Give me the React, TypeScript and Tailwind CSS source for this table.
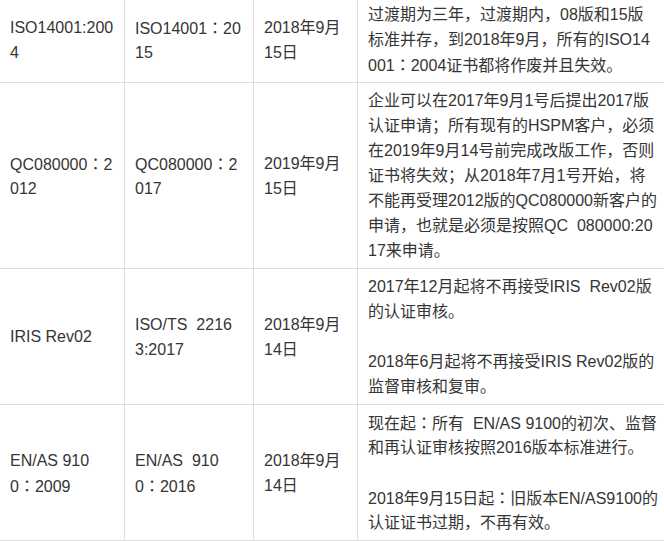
const rows = [
  {
    a: ['ISO14001:200', '4'],
    b: ['ISO14001：20', '15'],
    c: ['2018年9月', '15日'],
    d: [
      '过渡期为三年，过渡期内，08版和15版',
      '标准并存，到2018年9月，所有的ISO14',
      '001：2004证书都将作废并且失效。',
    ],
  },
  {
    a: ['QC080000：2', '012'],
    b: ['QC080000：2', '017'],
    c: ['2019年9月', '15日'],
    d: [
      '企业可以在2017年9月1号后提出2017版',
      '认证申请；所有现有的HSPM客户，必须',
      '在2019年9月14号前完成改版工作，否则',
      '证书将失效；从2018年7月1号开始，将',
      '不能再受理2012版的QC080000新客户的',
      '申请，也就是必须是按照QC  080000:20',
      '17来申请。',
    ],
  },
  {
    a: ['IRIS Rev02'],
    b: ['ISO/TS  2216', '3:2017'],
    c: ['2018年9月', '14日'],
    d: [
      '2017年12月起将不再接受IRIS  Rev02版',
      '的认证审核。',
      '',
      '2018年6月起将不再接受IRIS Rev02版的',
      '监督审核和复审。',
    ],
  },
  {
    a: ['EN/AS 910', '0：2009'],
    b: ['EN/AS  910', '0：2016'],
    c: ['2018年9月', '14日'],
    d: [
      '现在起：所有  EN/AS 9100的初次、监督',
      '和再认证审核按照2016版本标准进行。',
      '',
      '2018年9月15日起：旧版本EN/AS9100的',
      '认证证书过期，不再有效。',
    ],
  },
];

// full-width colon is centred in the reference, SC puts it to the left
const Line = ({ text }: { text: string }) => {
  const parts = text.split('：');
  return (
    <span className="block h-[25px] whitespace-pre">
      {text === ''
        ? '\u00a0'
        : parts.map((p, i) => (
            <span key={i}>
              {i > 0 && (
                <span style={{ fontFamily: '"Noto Sans CJK JP", sans-serif' }}>：</span>
              )}
              {p}
            </span>
          ))}
    </span>
  );
};

const Lines = ({ lines }: { lines: string[] }) => (
  <>
    {lines.map((line, i) => (
      <Line key={i} text={line} />
    ))}
  </>
);

const cell = 'border border-[#dddddd] px-[10px] py-[5px] align-middle';

export default function App() {
  return (
    <div
      className="w-[664px] h-[541px] overflow-hidden bg-white text-[16px] leading-[25px] text-[#353535]"
      style={{ fontFamily: '"Liberation Sans", "Noto Sans CJK SC", sans-serif' }}
    >
      <table className="table-fixed border-collapse -mt-[4px] -ml-px w-[665px]">
        <colgroup>
          <col className="w-[125px]" />
          <col className="w-[129px]" />
          <col className="w-[104px]" />
          <col className="w-[307px]" />
        </colgroup>
        <tbody>
          {rows.map((row, i) => (
            <tr key={i}>
              <td className={cell}>
                <Lines lines={row.a} />
              </td>
              <td className={cell}>
                <Lines lines={row.b} />
              </td>
              <td className={cell}>
                <Lines lines={row.c} />
              </td>
              <td className={`${cell} align-top`}>
                <Lines lines={row.d} />
              </td>
            </tr>
          ))}
        </tbody>
      </table>
    </div>
  );
}
